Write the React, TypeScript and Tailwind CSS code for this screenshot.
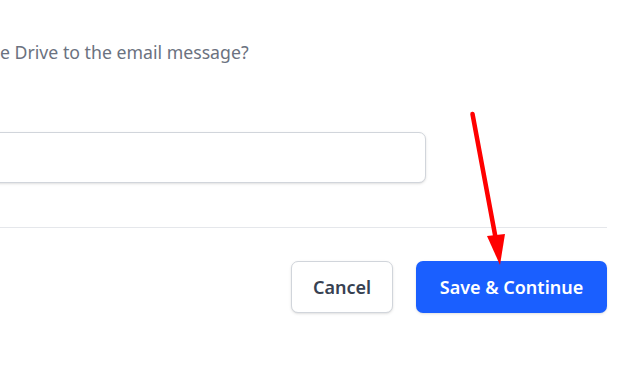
export default function App() {
  return (
    <div className="relative w-[629px] h-[373px] overflow-hidden bg-white" style={{ fontFamily: "'Noto Sans', sans-serif" }}>
      <div className="ml-[-40px] w-[647px] pt-[39px]">
        <p className="pl-[40px] whitespace-nowrap text-[17.7px] leading-[26px] text-[#6b7280]">
          e Drive to the email message?
        </p>
        <div className="mt-[67px] h-[51px] w-[466px] rounded-[7px] border border-[#d1d5db] bg-white shadow-sm"></div>
        <div className="mt-[44px] border-t border-[#e5e7eb]"></div>
        <div className="mt-[33px] flex justify-end gap-[23px]">
          <button className="h-[52px] w-[102px] rounded-[7px] border border-[#d1d5db] bg-white text-[18px] font-semibold text-[#374151] shadow-sm">
            Cancel
          </button>
          <button className="h-[52px] w-[191px] rounded-[7px] bg-[#1a5fff] text-[18px] font-semibold text-white shadow-sm">
            Save &amp; Continue
          </button>
        </div>
      </div>
      <svg className="absolute left-0 top-0" width="629" height="373" viewBox="0 0 629 373">
        <line x1="472.5" y1="114" x2="496" y2="240" stroke="#ff0000" strokeWidth="4.5" strokeLinecap="round" />
        <polygon points="487,236 505,234 500,265" fill="#ff0000" />
      </svg>
    </div>
  );
}
